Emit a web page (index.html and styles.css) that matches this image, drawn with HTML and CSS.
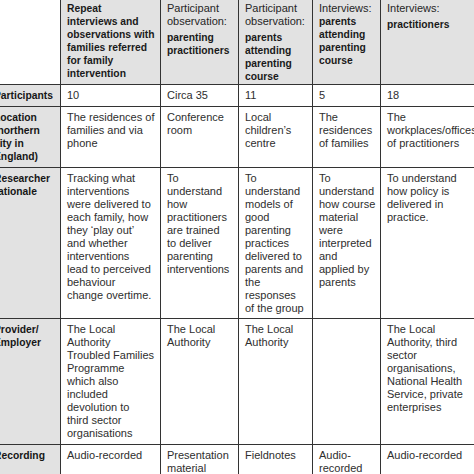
FILE: index.html
```html
<!DOCTYPE html>
<html lang="en">
<head>
<meta charset="utf-8">
<title>Study design table</title>
<link rel="stylesheet" href="styles.css">
</head>
<body>
<table class="grid">
  <colgroup>
    <col class="c0"><col class="c1"><col class="c2"><col class="c3"><col class="c4"><col class="c5">
  </colgroup>
  <tr class="r-head">
    <th class="corner"></th>
    <th class="head"><b>Repeat<br>interviews and<br>observations with<br>families referred<br>for family<br>intervention</b></th>
    <th class="head"><span class="lab">Participant<br>observation:</span><b class="sub">parenting<br>practitioners</b></th>
    <th class="head"><span class="lab">Participant<br>observation:</span><b class="sub">parents<br>attending<br>parenting<br>course</b></th>
    <th class="head"><span class="lab">Interviews:</span><br><b>parents<br>attending<br>parenting<br>course</b></th>
    <th class="head"><span class="lab">Interviews:</span><b class="sub">practitioners</b></th>
  </tr>
  <tr class="r1">
    <th class="rowlab">Participants</th>
    <td>10</td><td>Circa 35</td><td>11</td><td>5</td><td>18</td>
  </tr>
  <tr class="r2">
    <th class="rowlab">Location<br>(northern<br>city in<br>England)</th>
    <td>The residences of<br>families and via<br>phone</td>
    <td>Conference<br>room</td>
    <td>Local<br>children’s<br>centre</td>
    <td>The<br>residences<br>of families</td>
    <td>The<br>workplaces/offices<br>of practitioners</td>
  </tr>
  <tr class="r3">
    <th class="rowlab">Researcher<br>rationale</th>
    <td>Tracking what<br>interventions<br>were delivered to<br>each family, how<br>they ‘play out’<br>and whether<br>interventions<br>lead to perceived<br>behaviour<br>change overtime.</td>
    <td>To<br>understand<br>how<br>practitioners<br>are trained<br>to deliver<br>parenting<br>interventions</td>
    <td>To<br>understand<br>models of<br>good<br>parenting<br>practices<br>delivered to<br>parents and<br>the<br>responses<br>of the group</td>
    <td>To<br>understand<br>how course<br>material<br>were<br>interpreted<br>and<br>applied by<br>parents</td>
    <td>To understand<br>how policy is<br>delivered in<br>practice.</td>
  </tr>
  <tr class="r4">
    <th class="rowlab">Provider/<br>Employer</th>
    <td>The Local<br>Authority<br>Troubled Families<br>Programme<br>which also<br>included<br>devolution to<br>third sector<br>organisations</td>
    <td>The Local<br>Authority</td>
    <td>The Local<br>Authority</td>
    <td></td>
    <td>The Local<br>Authority, third<br>sector<br>organisations,<br>National Health<br>Service, private<br>enterprises</td>
  </tr>
  <tr class="r5">
    <th class="rowlab">Recording</th>
    <td>Audio-recorded</td>
    <td>Presentation<br>material</td>
    <td>Fieldnotes</td>
    <td>Audio-<br>recorded</td>
    <td>Audio-recorded</td>
  </tr>
</table>
</body>
</html>
```
FILE: styles.css
```css
html, body {
  margin: 0;
  padding: 0;
  background: #fff;
  overflow: hidden;
}
body {
  width: 474px;
  height: 474px;
}
.grid {
  border-collapse: collapse;
  table-layout: fixed;
  width: 513px;
  margin: -3px 0 0 -13px;
  font-family: "Liberation Sans", Arial, sans-serif;
  font-size: 11px;
  line-height: 13px;
  color: #2e2e2e;
}
.c0 { width: 73px; }
.c1 { width: 100px; }
.c2 { width: 78px; }
.c3 { width: 74px; }
.c4 { width: 68px; }
.c5 { width: 120px; }
.grid th,
.grid td {
  border: 1px solid #333;
  padding: 4px 6px 3px;
  vertical-align: top;
  text-align: left;
  white-space: nowrap;
  font-weight: normal;
}
.grid td { background: #fff; }
.grid .head,
.grid .corner { padding-bottom: 1px; }
.head { background: #e2e2e2; color: #1a1a1a; }
.corner { background: #fff; border-top-color: #fff; border-left-color: #fff; }
.rowlab {
  background: #e2e2e2;
  color: #161616;
  font-weight: bold !important;
  font-size: 10.3px;
}
.head b {
  font-weight: bold;
  font-size: 10.3px;
}
.lab { color: #262626; }
.sub { display: block; margin-top: 3px; }
.r-head { height: 86px; }
.r1 { height: 22px; }
.r2 { height: 61px; }
.r3 { height: 150px; }
.r4 { height: 126px; }
.r5 { height: 40px; }
```
